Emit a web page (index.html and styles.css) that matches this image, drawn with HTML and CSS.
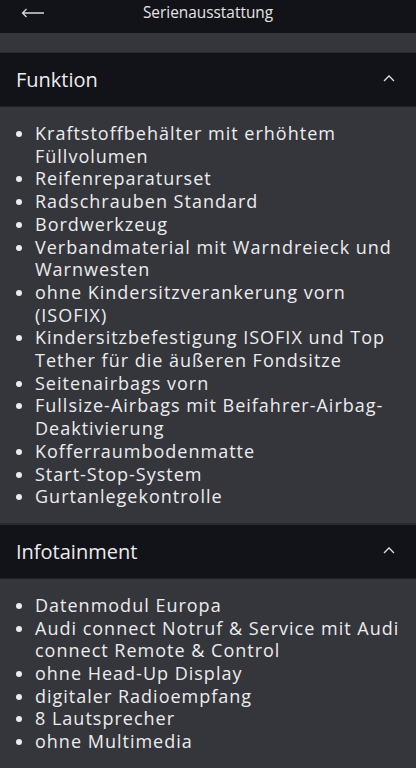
FILE: index.html
```html
<!DOCTYPE html>
<html lang="de">
<head>
<meta charset="utf-8">
<link rel="stylesheet" href="styles.css">
</head>
<body>
<header class="topbar">
  <svg class="back" width="24" height="10" viewBox="0 0 24 10"><path d="M23 5H1.5M5.5 1L1.5 5l4 4" fill="none" stroke="#d8d8da" stroke-width="1.3"/></svg>
  <div class="title">Serienausstattung</div>
</header>
<div class="spacer"></div>
<section class="group">
  <div class="group-head">
    <span class="group-title">Funktion</span>
    <svg class="chev" width="12" height="7" viewBox="0 0 12 7"><path d="M1 6l5-5 5 5" fill="none" stroke="#e0e0e2" stroke-width="1.3"/></svg>
  </div>
  <ul class="items">
    <li>Kraftstoffbehälter mit erhöhtem Füllvolumen</li>
    <li>Reifenreparaturset</li>
    <li>Radschrauben Standard</li>
    <li>Bordwerkzeug</li>
    <li>Verbandmaterial mit Warndreieck und Warnwesten</li>
    <li>ohne Kindersitzverankerung vorn (ISOFIX)</li>
    <li>Kindersitzbefestigung ISOFIX und Top Tether für die äußeren Fondsitze</li>
    <li>Seitenairbags vorn</li>
    <li>Fullsize-Airbags mit Beifahrer-Airbag-Deaktivierung</li>
    <li>Kofferraumbodenmatte</li>
    <li>Start-Stop-System</li>
    <li>Gurtanlegekontrolle</li>
  </ul>
</section>
<section class="group">
  <div class="group-head">
    <span class="group-title">Infotainment</span>
    <svg class="chev" width="12" height="7" viewBox="0 0 12 7"><path d="M1 6l5-5 5 5" fill="none" stroke="#e0e0e2" stroke-width="1.3"/></svg>
  </div>
  <ul class="items">
    <li>Datenmodul Europa</li>
    <li>Audi connect Notruf &amp; Service mit Audi connect Remote &amp; Control</li>
    <li>ohne Head-Up Display</li>
    <li>digitaler Radioempfang</li>
    <li>8 Lautsprecher</li>
    <li>ohne Multimedia</li>
  </ul>
</section>
</body>
</html>
```
FILE: styles.css
```css
html, body {
  margin: 0;
  padding: 0;
  background: #35363b;
  color: #ececee;
  font-family: "Open Sans", "Noto Sans", sans-serif;
}
.topbar {
  height: 33px;
  background: #121318;
  display: flex;
  align-items: flex-start;
  position: relative;
}
.back {
  margin-left: 21px;
  margin-top: 8px;
}
.title {
  position: absolute;
  left: 0;
  right: 0;
  text-align: center;
  font-size: 15.4px;
  line-height: 20px;
  color: #e4e4e6;
  top: 3px;
}
.spacer {
  height: 19px;
  border-bottom: 1px solid #2a2b30;
}
.group-head {
  height: 53px;
  background: #121318;
  display: flex;
  align-items: center;
  justify-content: space-between;
  padding: 0 21px 0 16px;
  border-bottom: 1px solid #202126;
}
.group-title {
  font-size: 20px;
  color: #ececee;
}
.chev {
  margin-top: -2px;
}
.items {
  margin: 0;
  padding: 15px 12px 15px 35px;
  font-size: 18px;
  letter-spacing: 1px;
  line-height: 22.7px;
  border-bottom: 2px solid #2a2b30;
}
.items li {
  list-style: disc;
}
.items li::marker {
  font-size: 17px;
}
```
